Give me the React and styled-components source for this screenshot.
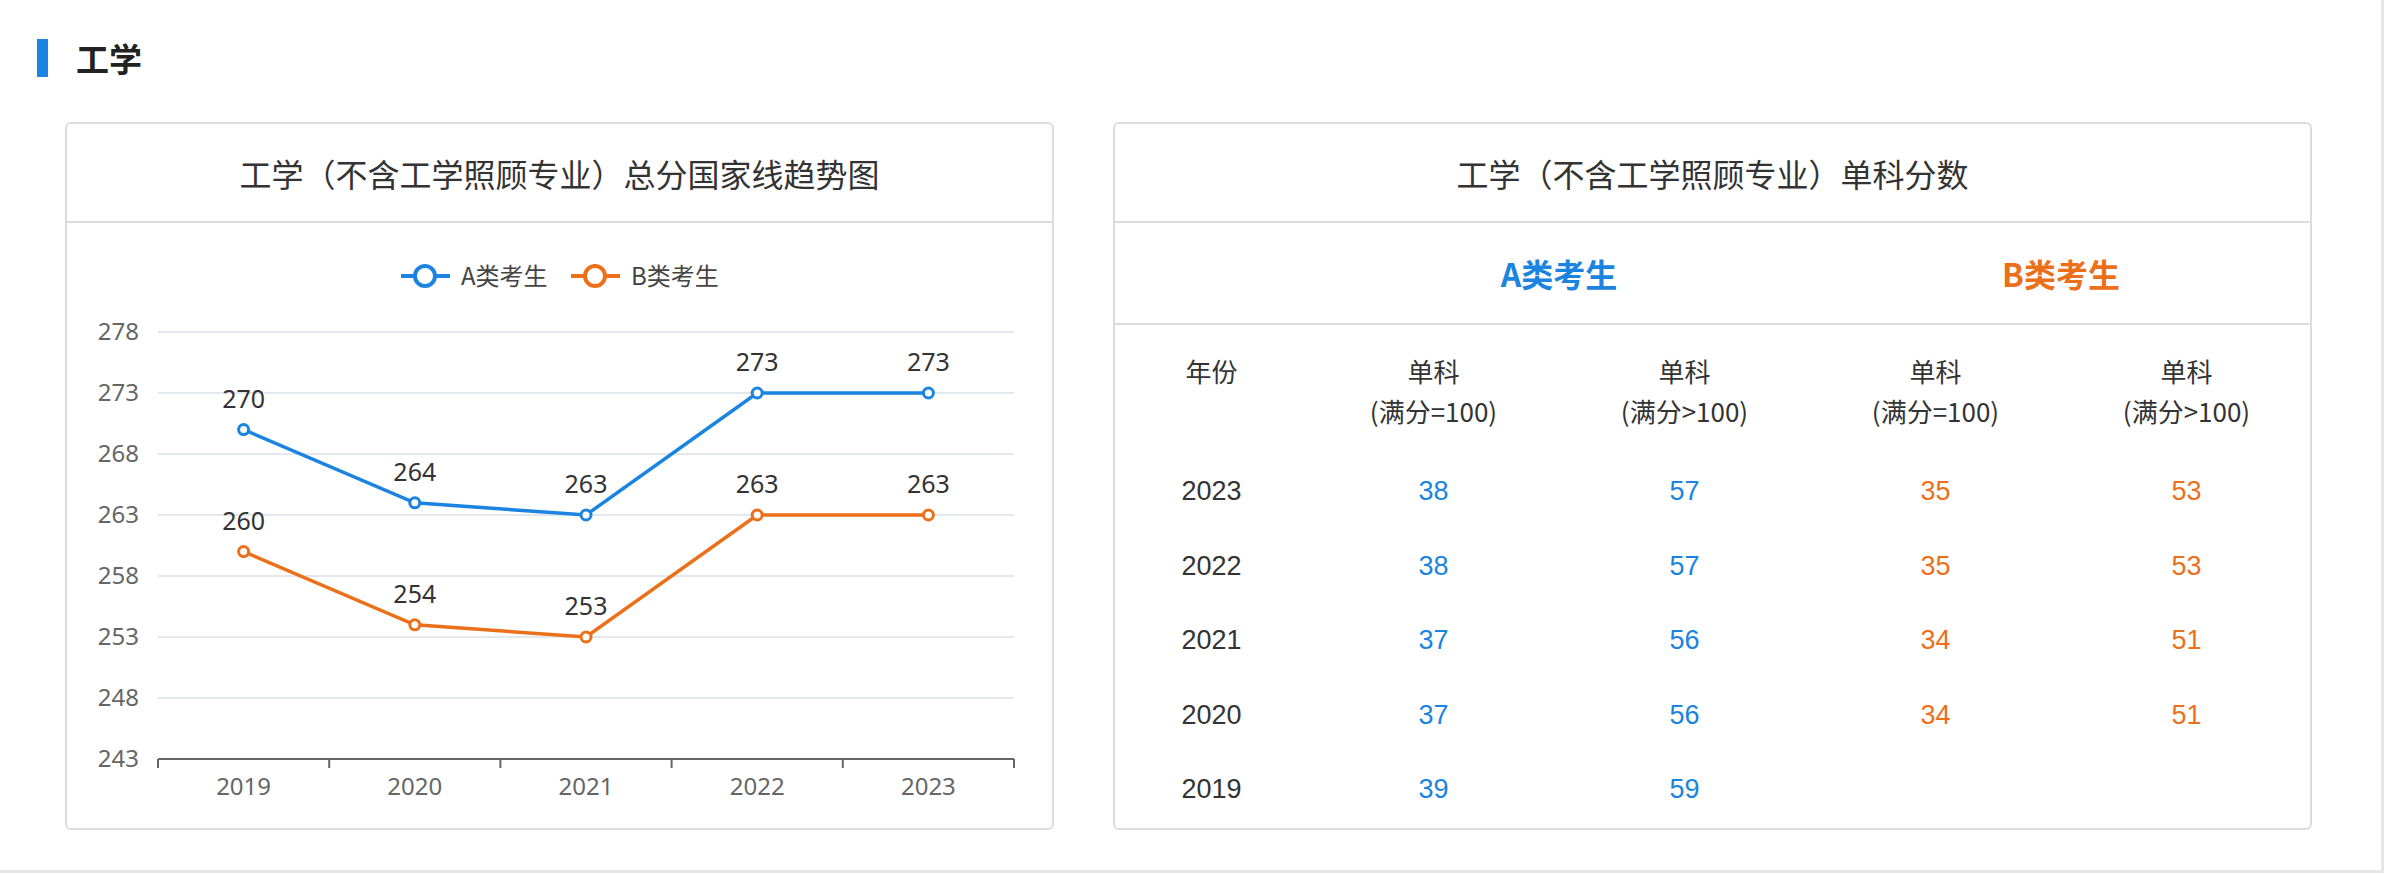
import React from 'react';
import styled, {createGlobalStyle} from 'styled-components';

const Global = createGlobalStyle`
  html, body { margin: 0; padding: 0; background: #fff; }
  body { font-family: "Noto Sans CJK SC", "Noto Sans", sans-serif; color: #333; }
`;

const BLUE = '#1a84e0';
const ORANGE = '#ec6f1a';

const Page = styled.div`
  width: 2381px;
  height: 870px;
  border-right: 3px solid #e6e6e6;
  border-bottom: 3px solid #e6e6e6;
  box-sizing: content-box;
`;

const SectionTitle = styled.h2`
  margin: 0;
  padding: 36px 0 0 37px;
  height: 44px;
  display: flex;
  align-items: center;
  gap: 28px;
  font-size: 33px;
  font-weight: 700;
  color: #222;
  &::before {
    content: '';
    width: 11px;
    height: 38px;
    background: ${BLUE};
  }
`;

const Cards = styled.div`
  display: flex;
  gap: 59px;
  padding: 42px 0 0 65px;
`;

const Card = styled.div`
  width: ${p => p.$w}px;
  height: 708px;
  border: 2px solid #dcdcdc;
  border-radius: 6px;
  box-sizing: border-box;
  overflow: hidden;
  display: flex;
  flex-direction: column;
`;

const CardHead = styled.div`
  flex-shrink: 0;
  height: 97px;
  border-bottom: 2px solid #dcdcdc;
  display: flex;
  align-items: center;
  justify-content: center;
  font-size: 32px;
  color: #333;
`;

const Table = styled.div`
  flex-shrink: 0;
  display: grid;
  grid-template-columns: 193px repeat(4, 251px);
  font-family: "Liberation Sans", "Noto Sans CJK SC", sans-serif;
  font-size: 27px;
  color: #333;
  text-align: center;
`;

const GroupRow = styled.div`
  grid-column: 1 / -1;
  display: grid;
  grid-template-columns: 193px 502px 502px;
  height: 100px;
  align-items: center;
  border-bottom: 2px solid #dcdcdc;
`;

const Group = styled.div`
  font-family: "Noto Sans CJK SC", sans-serif;
  font-weight: 700;
  font-size: 32px;
  color: ${p => p.$c};
`;

const HeadCell = styled.div`
  padding-top: 26px;
  height: 120px;
  line-height: 40px;
  font-family: "Noto Sans CJK SC", sans-serif;
  font-size: 26px;
`;

const Cell = styled.div`
  height: 74.5px;
  line-height: 40px;
  color: ${p => p.$c || '#333'};
`;

const Legend = styled.text`
  font-size: 24px;
  fill: #444;
  font-family: "Noto Sans CJK SC", sans-serif;
`;

const A = [270, 264, 263, 273, 273];
const B = [260, 254, 253, 263, 263];
const YEARS = [2019, 2020, 2021, 2022, 2023];
const xs = YEARS.map((_, i) => 91 + 171.2 * (i + 0.5));
const y = v => 109 + ((278 - v) / 5) * 61;

function Series({data, color}) {
  const pts = data.map((v, i) => `${xs[i]},${y(v)}`).join(' ');
  return (
    <g>
      <polyline points={pts} fill="none" stroke={color} strokeWidth="3.5" />
      {data.map((v, i) => (
        <g key={i}>
          <circle cx={xs[i]} cy={y(v)} r="5" fill="#fff" stroke={color} strokeWidth="3" />
          <text x={xs[i]} y={y(v) - 22} textAnchor="middle" fontSize="25" fill="#333"
            fontFamily="Noto Sans, sans-serif">{v}</text>
        </g>
      ))}
    </g>
  );
}

function Chart() {
  const ticks = [278, 273, 268, 263, 258, 253, 248, 243];
  return (
    <svg width="985" height="607" style={{display: 'block', flexShrink: 0}}>
      <line x1="334" x2="383" y1="53" y2="53" stroke={BLUE} strokeWidth="4" />
      <circle cx="358" cy="53" r="10" fill="#fff" stroke={BLUE} strokeWidth="4" />
      <Legend x="394" y="62">A类考生</Legend>
      <line x1="504" x2="553" y1="53" y2="53" stroke={ORANGE} strokeWidth="4" />
      <circle cx="528" cy="53" r="10" fill="#fff" stroke={ORANGE} strokeWidth="4" />
      <Legend x="564" y="62">B类考生</Legend>
      {ticks.map(t => (
        <g key={t}>
          {t !== 243 && <line x1="91" x2="947" y1={y(t)} y2={y(t)} stroke="#e3e8ef" strokeWidth="2" />}
          <text x="72" y={y(t) + 8} textAnchor="end" fontSize="24" fill="#666"
            fontFamily="Noto Sans, sans-serif">{t}</text>
        </g>
      ))}
      <line x1="91" x2="947" y1={y(243)} y2={y(243)} stroke="#666" strokeWidth="2" />
      {[0, 1, 2, 3, 4, 5].map(i => (
        <line key={i} x1={91 + 171.2 * i} x2={91 + 171.2 * i} y1={y(243)} y2={y(243) + 9}
          stroke="#666" strokeWidth="2" />
      ))}
      {YEARS.map((yr, i) => (
        <text key={yr} x={xs[i]} y={y(243) + 36} textAnchor="middle" fontSize="24" fill="#666"
          fontFamily="Noto Sans, sans-serif">{yr}</text>
      ))}
      <Series data={A} color={BLUE} />
      <Series data={B} color={ORANGE} />
    </svg>
  );
}

const ROWS = [
  [2023, 38, 57, 35, 53],
  [2022, 38, 57, 35, 53],
  [2021, 37, 56, 34, 51],
  [2020, 37, 56, 34, 51],
  [2019, 39, 59, '', ''],
];

export default function App() {
  return (
    <Page>
      <Global />
      <SectionTitle>工学</SectionTitle>
      <Cards>
        <Card $w={989}>
          <CardHead>工学（不含工学照顾专业）总分国家线趋势图</CardHead>
          <Chart />
        </Card>
        <Card $w={1199}>
          <CardHead>工学（不含工学照顾专业）单科分数</CardHead>
          <Table>
            <GroupRow>
              <span />
              <Group $c={BLUE}>A类考生</Group>
              <Group $c={ORANGE}>B类考生</Group>
            </GroupRow>
            <HeadCell>年份</HeadCell>
            <HeadCell>单科<br />(满分=100)</HeadCell>
            <HeadCell>单科<br />(满分&gt;100)</HeadCell>
            <HeadCell>单科<br />(满分=100)</HeadCell>
            <HeadCell>单科<br />(满分&gt;100)</HeadCell>
            {ROWS.map(r => r.map((v, i) => (
              <Cell key={`${r[0]}-${i}`} $c={i === 0 ? null : i < 3 ? BLUE : ORANGE}>{v}</Cell>
            )))}
          </Table>
        </Card>
      </Cards>
    </Page>
  );
}
